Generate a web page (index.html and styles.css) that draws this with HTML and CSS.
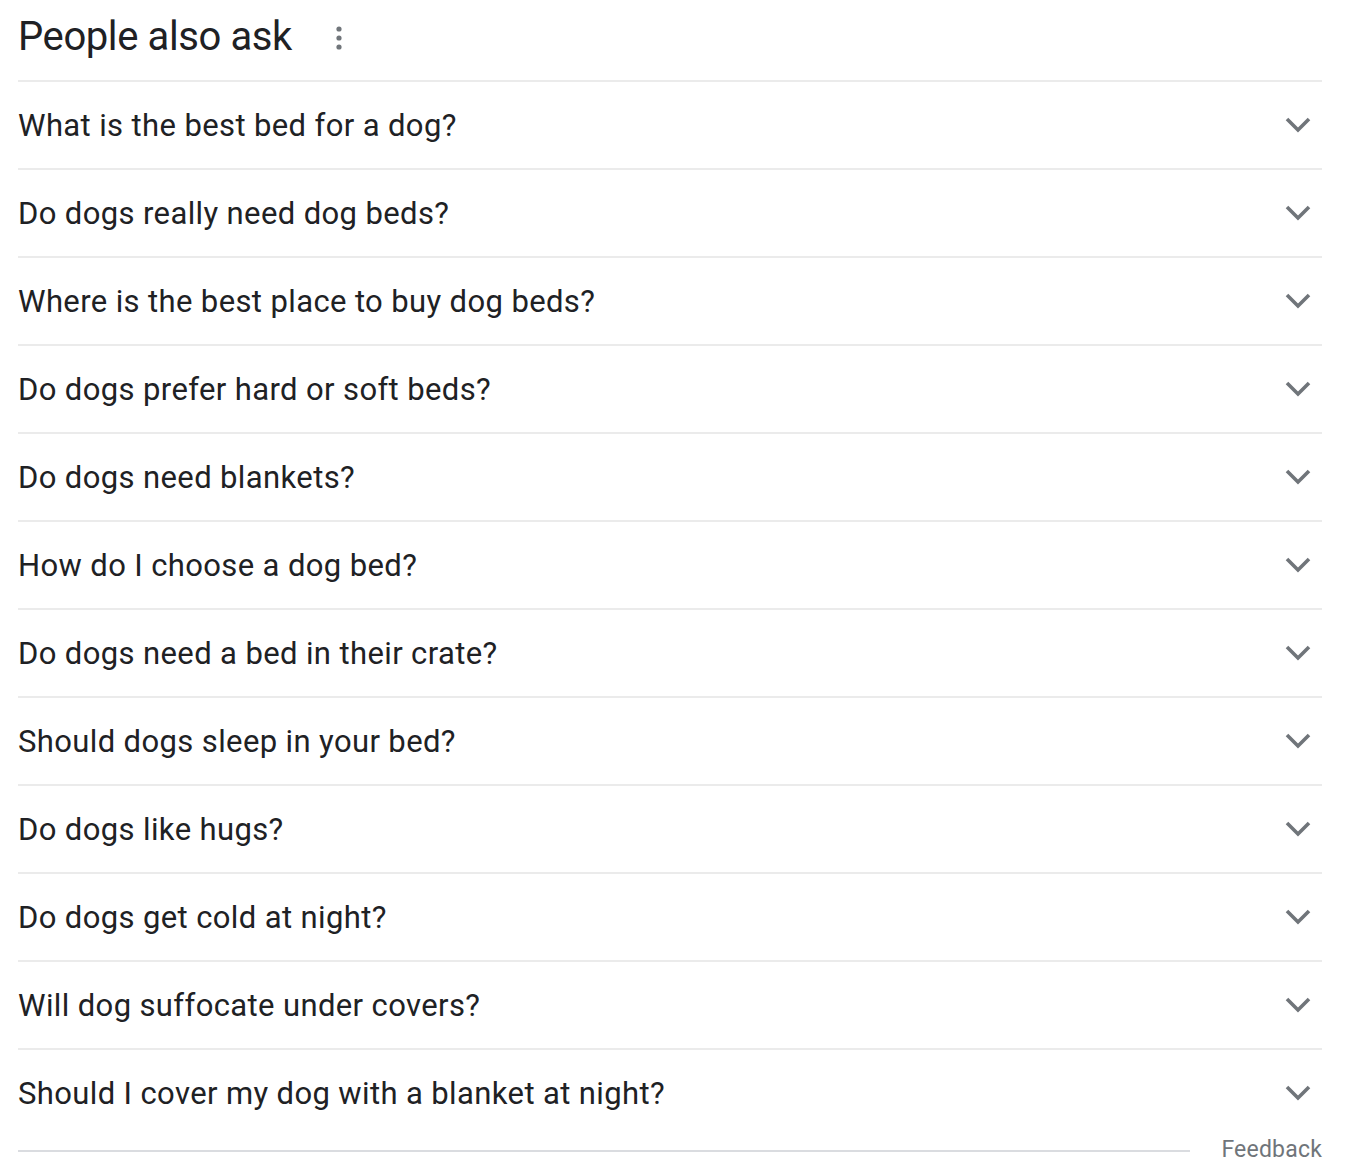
FILE: index.html
```html
<!DOCTYPE html>
<html lang="en">
<head>
  <meta charset="UTF-8">
  <title>People also ask</title>
  <link rel="stylesheet" href="styles.css">
</head>
<body>
  <div class="paa">
    <div class="paa-header">
      <h2>People also ask</h2>
      <span class="more">
        <svg width="6" height="24" viewBox="0 0 6 24"><circle cx="3" cy="3" r="2.6"/><circle cx="3" cy="12" r="2.6"/><circle cx="3" cy="21" r="2.6"/></svg>
      </span>
    </div>
    <div class="question">What is the best bed for a dog?<svg class="chev" viewBox="0 0 26 16"><path d="M2 2 L13 13 L24 2"/></svg></div>
    <div class="question">Do dogs really need dog beds?<svg class="chev" viewBox="0 0 26 16"><path d="M2 2 L13 13 L24 2"/></svg></div>
    <div class="question">Where is the best place to buy dog beds?<svg class="chev" viewBox="0 0 26 16"><path d="M2 2 L13 13 L24 2"/></svg></div>
    <div class="question">Do dogs prefer hard or soft beds?<svg class="chev" viewBox="0 0 26 16"><path d="M2 2 L13 13 L24 2"/></svg></div>
    <div class="question">Do dogs need blankets?<svg class="chev" viewBox="0 0 26 16"><path d="M2 2 L13 13 L24 2"/></svg></div>
    <div class="question">How do I choose a dog bed?<svg class="chev" viewBox="0 0 26 16"><path d="M2 2 L13 13 L24 2"/></svg></div>
    <div class="question">Do dogs need a bed in their crate?<svg class="chev" viewBox="0 0 26 16"><path d="M2 2 L13 13 L24 2"/></svg></div>
    <div class="question">Should dogs sleep in your bed?<svg class="chev" viewBox="0 0 26 16"><path d="M2 2 L13 13 L24 2"/></svg></div>
    <div class="question">Do dogs like hugs?<svg class="chev" viewBox="0 0 26 16"><path d="M2 2 L13 13 L24 2"/></svg></div>
    <div class="question">Do dogs get cold at night?<svg class="chev" viewBox="0 0 26 16"><path d="M2 2 L13 13 L24 2"/></svg></div>
    <div class="question">Will dog suffocate under covers?<svg class="chev" viewBox="0 0 26 16"><path d="M2 2 L13 13 L24 2"/></svg></div>
    <div class="question">Should I cover my dog with a blanket at night?<svg class="chev" viewBox="0 0 26 16"><path d="M2 2 L13 13 L24 2"/></svg></div>
    <div class="paa-footer">
      <span class="rule"></span>
      <span class="feedback">Feedback</span>
    </div>
  </div>
</body>
</html>
```

FILE: styles.css
```css
body {
  margin: 0;
  padding: 0 28px 0 18px;
  background: #fff;
  font-family: Roboto, "Liberation Sans", sans-serif;
  color: #202124;
}
.paa {
  width: 1304px;
}
.paa-header {
  height: 80px;
  display: flex;
  align-items: center;
}
.paa-header h2 {
  margin: 0;
  font-size: 40px;
  font-weight: 400;
  letter-spacing: -0.4px;
  line-height: 1;
  position: relative;
  top: -3px;
}
.more {
  margin-left: 44px;
  display: flex;
  position: relative;
  top: -2px;
}
.more svg {
  fill: #70757a;
}
.question {
  height: 86px;
  border-top: 2px solid #ebebeb;
  display: flex;
  align-items: center;
  justify-content: space-between;
  font-size: 31px;
  letter-spacing: 0.38px;
}
.chev {
  width: 26px;
  height: 16px;
  margin-right: 11px;
  fill: none;
  stroke: #70757a;
  stroke-width: 3.6;
}
.paa-footer {
  display: flex;
  align-items: flex-start;
}
.rule {
  flex: 1;
  height: 2px;
  margin-top: 14px;
  background: #dadce0;
}
.feedback {
  margin-left: 31px;
  font-size: 23px;
  line-height: 27px;
  letter-spacing: 0.2px;
  color: #70757a;
}
```
